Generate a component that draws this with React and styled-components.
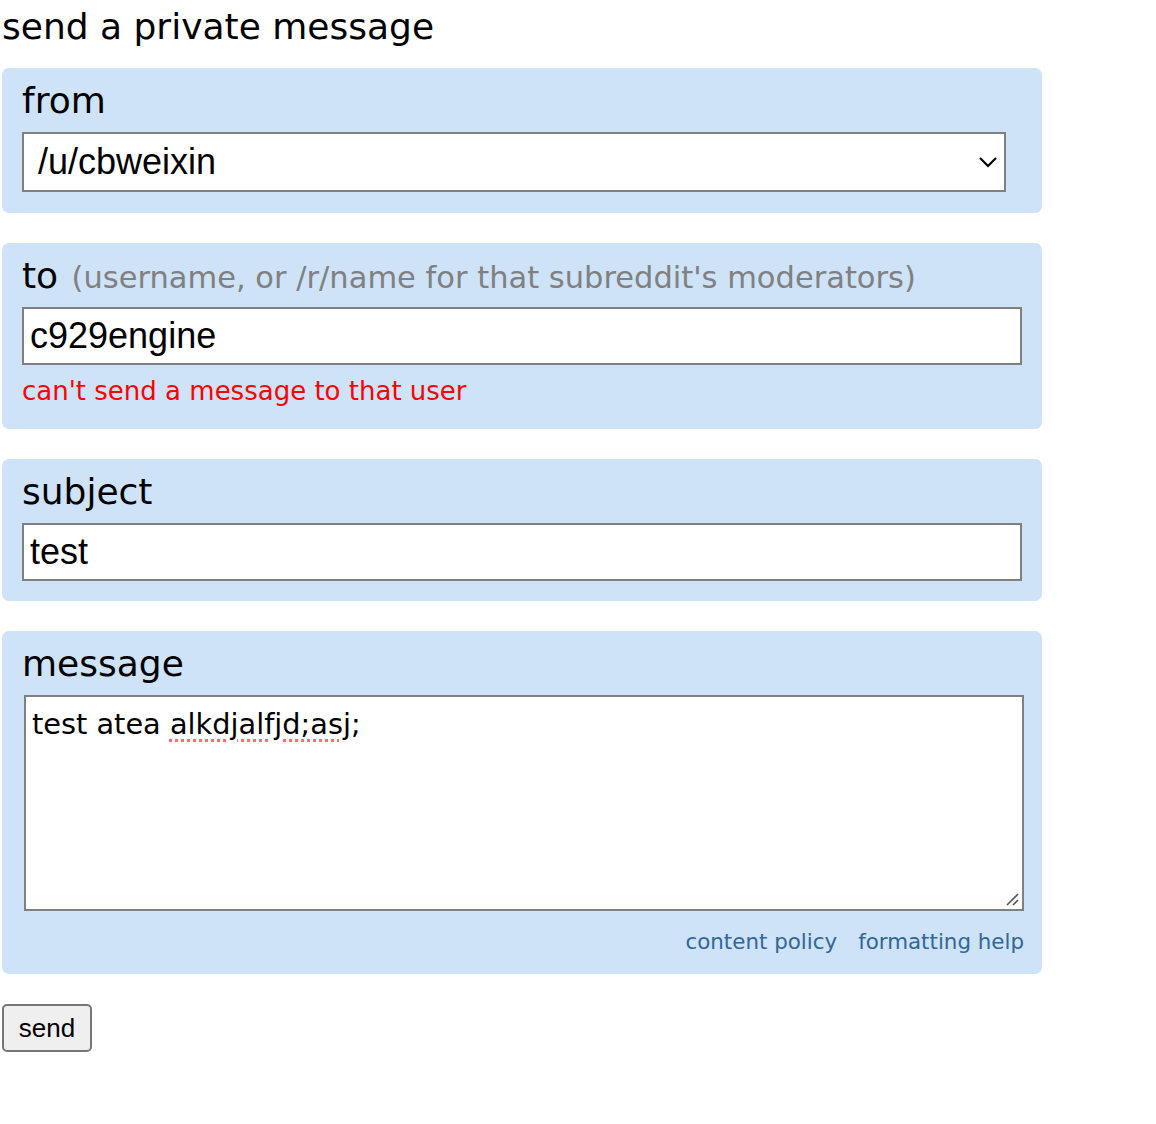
import React from "react";
import styled, { createGlobalStyle } from "styled-components";

const Global = createGlobalStyle`
  html, body { margin: 0; padding: 0; background: #fff; }
  body { font-family: "DejaVu Sans", Verdana, sans-serif; color: #000; }
`;

const Page = styled.div`
  padding: 0 0 0 2px;
  width: 1040px;
`;

const Title = styled.h1`
  margin: 0 0 20px 0;
  padding: 6px 0 0 0;
  font-size: 36px;
  font-weight: normal;
  line-height: 42px;
  white-space: nowrap;
`;

const Panel = styled.div`
  background: #cee3f8;
  border-radius: 7px;
  padding: 12px 20px ${(p) => p.$pb || 20}px 20px;
  margin-bottom: 30px;
  display: flex;
  flex-direction: column;
`;

const Label = styled.div`
  font-size: 36px;
  line-height: 42px;
  height: 42px;
  margin-bottom: 10px;
  white-space: nowrap;
`;

const Hint = styled.span`
  color: #808080;
  font-size: 30.5px;
  line-height: 1;
  margin-left: 2px;
`;

const Select = styled.div`
  box-sizing: border-box;
  width: 984px;
  height: 60px;
  background: #fff;
  border: 2px solid #808080;
  display: flex;
  align-items: center;
  justify-content: space-between;
  padding: 0 6px 0 14px;
  font-family: "Liberation Sans", Arial, sans-serif;
  font-size: 36px;
`;

const TextInput = styled.div`
  box-sizing: border-box;
  width: 1000px;
  height: 58px;
  background: #fff;
  border: 2px solid #808080;
  display: flex;
  align-items: center;
  padding: 0 6px;
  font-family: "Liberation Sans", Arial, sans-serif;
  font-size: 36px;
`;

const ErrorText = styled.div`
  color: #ff0000;
  font-size: 26px;
  line-height: 32px;
  margin-top: 10px;
`;

const TextArea = styled.div`
  position: relative;
  box-sizing: border-box;
  width: 1000px;
  height: 216px;
  margin-left: 2px;
  background: #fff;
  border: 2px solid #808080;
  padding: 11px 6px;
  font-size: 28.8px;
  line-height: 32px;
`;

const Misspelled = styled.span`
  text-decoration: underline dotted #ff6b6b;
  text-decoration-thickness: 3px;
  text-underline-offset: 5px;
`;

const Grip = styled.svg`
  position: absolute;
  right: 2px;
  bottom: 2px;
`;

const Links = styled.div`
  display: flex;
  justify-content: flex-end;
  gap: 21px;
  margin-top: 16px;
  margin-right: -2px;
  font-size: 21.4px;
  line-height: 30px;
`;

const HelpLink = styled.a`
  color: #336699;
  text-decoration: none;
`;

const SendButton = styled.button`
  width: 90px;
  height: 48px;
  background: #efefef;
  border: 2px solid #767676;
  border-radius: 5px;
  font-family: "Liberation Sans", Arial, sans-serif;
  font-size: 26px;
  color: #000;
  padding: 0;
`;

export default function App() {
  return (
    <>
      <Global />
      <Page>
        <Title>send a private message</Title>
        <Panel $pb={21}>
          <Label>from</Label>
          <Select>
            <span>/u/cbweixin</span>
            <svg width="20" height="12" viewBox="0 0 20 12">
              <path d="M2 2 L10 10 L18 2" fill="none" stroke="#000" strokeWidth="2.2" />
            </svg>
          </Select>
        </Panel>
        <Panel $pb={22}>
          <Label>
            to <Hint>(username, or /r/name for that subreddit's moderators)</Hint>
          </Label>
          <TextInput>c929engine</TextInput>
          <ErrorText>can't send a message to that user</ErrorText>
        </Panel>
        <Panel $pb={20}>
          <Label>subject</Label>
          <TextInput>test</TextInput>
        </Panel>
        <Panel $pb={17}>
          <Label>message</Label>
          <TextArea>
            test atea <Misspelled>alkdjalfjd;asj</Misspelled>;
            <Grip width="16" height="16" viewBox="0 0 16 16">
              <path d="M14 3 L3 14 M14 9 L9 14" stroke="#555" strokeWidth="1.6" />
            </Grip>
          </TextArea>
          <Links>
            <HelpLink href="#">content policy</HelpLink>
            <HelpLink href="#">formatting help</HelpLink>
          </Links>
        </Panel>
        <SendButton>send</SendButton>
      </Page>
    </>
  );
}
